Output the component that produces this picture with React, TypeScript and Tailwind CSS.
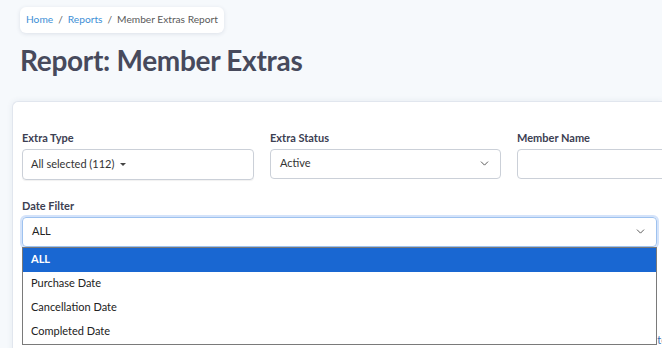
import { ChevronDown } from "lucide-react";

const font = { fontFamily: "Lato, 'Liberation Sans', sans-serif" };

export default function App() {
  return (
    <div className="h-[348px] w-[662px] overflow-hidden bg-[#f6f9fc]" style={font}>
      <div className="px-5 pt-[5px]">
        <nav className="inline-flex items-center gap-[5px] rounded-md bg-white px-[6px] h-[26px] text-[10.2px] shadow-[0_1px_4px_rgba(30,50,90,0.12)]">
          <span className="text-[#3d8fd6]">Home</span>
          <span className="text-[#666]">/</span>
          <span className="text-[#3d8fd6]">Reports</span>
          <span className="text-[#666]">/</span>
          <span className="text-[#5a5a5a]">Member Extras Report</span>
        </nav>
        <h1 className="mt-[10px] text-[28px] font-bold leading-[34px] tracking-[-0.3px] text-[#474a5c]">
          Report: Member Extras
        </h1>
      </div>

      <div className="ml-3 mt-[24px] h-[300px] rounded-tl-md border-l border-t border-[#e1e6ee] bg-white pl-[9px] pt-[29px] shadow-[0_0_6px_rgba(40,60,100,0.08)]">
        <div className="flex gap-[16px] w-[780px]">
          <div className="w-[232px] shrink-0">
            <label className="block text-[11px] font-bold leading-[14px] text-[#3c4052] mb-[4px]">Extra Type</label>
            <div className="flex h-[31px] items-center gap-[6px] rounded border border-[#cbd0d8] px-[8px] text-[11px] text-[#333] shadow-[0_1px_1px_rgba(0,0,0,0.06)]">
              All selected (112)
              <span className="mt-[1px] border-x-[3px] border-t-[3px] border-x-transparent border-t-[#444]" />
            </div>
          </div>
          <div className="w-[231px] shrink-0">
            <label className="block text-[11px] font-bold leading-[14px] text-[#3c4052] mb-[4px]">Extra Status</label>
            <div className="flex h-[30px] items-center justify-between rounded border border-[#cbd0d8] pl-[9px] pr-[9px] text-[11px] text-[#333]">
              Active
              <ChevronDown className="h-[13px] w-[13px] text-[#444]" strokeWidth={1.6} />
            </div>
          </div>
          <div className="w-[231px] shrink-0">
            <label className="block text-[11px] font-bold leading-[14px] text-[#3c4052] mb-[4px]">Member Name</label>
            <div className="h-[30px] rounded border border-[#cbd0d8]" />
          </div>
        </div>

        <div className="mt-[19px] w-[635px]">
          <label className="block text-[11px] font-bold leading-[14px] text-[#3c4052] mb-[4px]">Date Filter</label>
          <div className="relative">
            <div className="flex h-[30px] items-center justify-between rounded border border-[#9ec2ef] pl-[9px] pr-[9px] text-[11px] text-[#222] shadow-[0_0_0_2px_rgba(170,200,245,0.5)]">
              ALL
              <ChevronDown className="h-[13px] w-[13px] text-[#444]" strokeWidth={1.6} />
            </div>
            <ul className="absolute left-0 top-[30px] z-10 w-full border border-[#7a7a7a] bg-white text-[11px] text-[#222]">
              <li className="flex h-[24px] items-center bg-[#1967d2] px-[8px] font-bold text-white">ALL</li>
              <li className="flex h-[24px] items-center px-[8px]">Purchase Date</li>
              <li className="flex h-[24px] items-center px-[8px]">Cancellation Date</li>
              <li className="flex h-[24px] items-center px-[8px]">Completed Date</li>
            </ul>
            <div className="flex justify-end pt-[85px] -mr-[10px] text-[11px] text-[#3d6fb0]">Generate</div>
          </div>
        </div>
      </div>
    </div>
  );
}
